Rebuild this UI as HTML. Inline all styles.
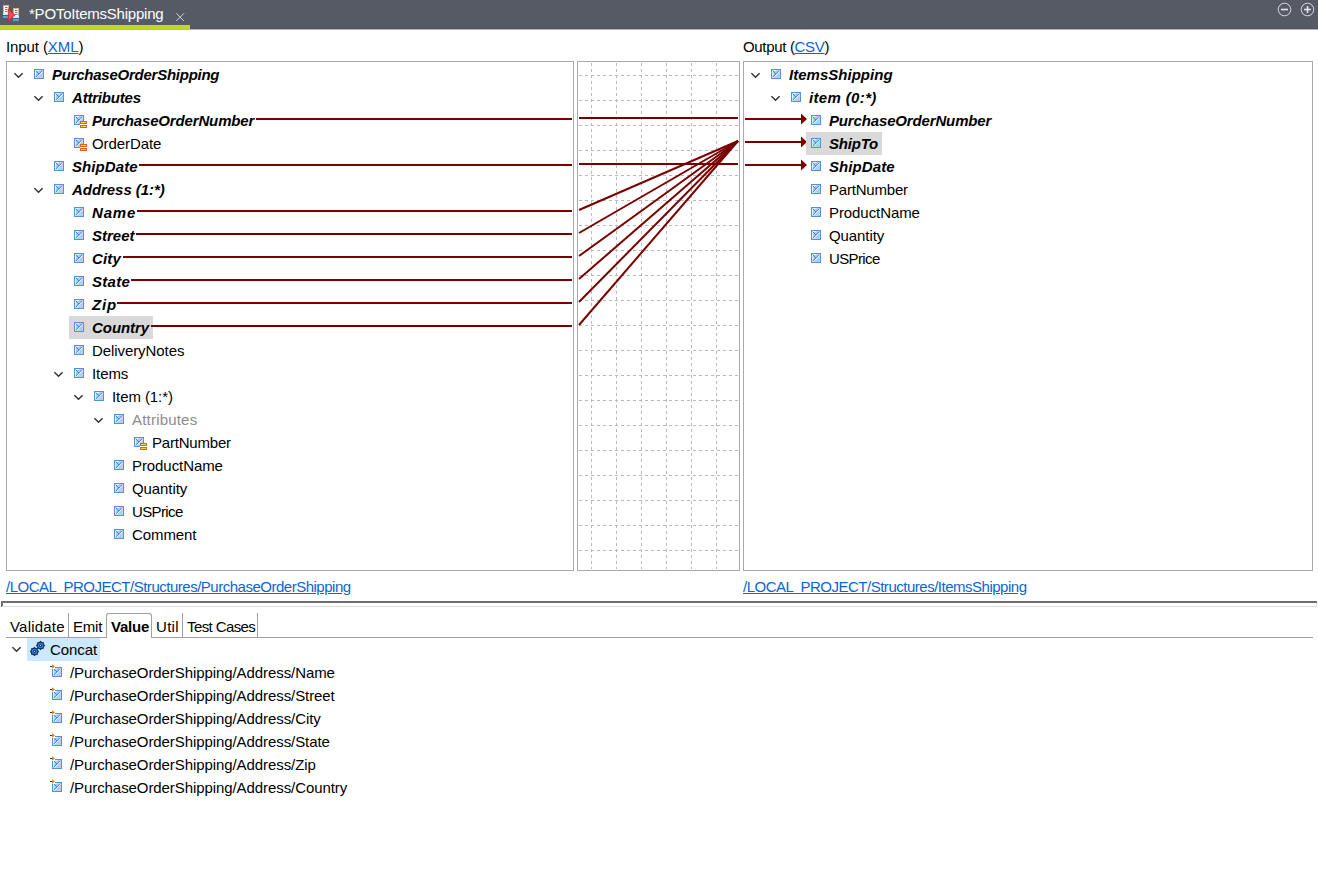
<!DOCTYPE html>
<html><head><meta charset="utf-8">
<style>
*{margin:0;padding:0;box-sizing:border-box}
html,body{width:1318px;height:885px;overflow:hidden;background:#fff;font-family:"Liberation Sans",sans-serif;font-size:15px;color:#000}
.abs{position:absolute;line-height:0}
.t{position:absolute;line-height:23px;white-space:nowrap}
.n{letter-spacing:-0.08px}
.bi{font-weight:bold;font-style:italic;letter-spacing:-0.2px}
.gr{color:#8c8c8c}
.fx{display:flex;align-items:center}
.ml{display:block;flex:1;height:2px;background:#7a0000;margin-left:2px;margin-top:-3px}
.sel{position:absolute;height:23px;background:#d9d9d9}
.ic,.ch{display:block}
a{color:#0a66d0;text-decoration:underline}
.box{position:absolute;border:1px solid #a8aab0;background:#fff}
.bar{position:absolute}
</style></head><body>
<div class="bar" style="left:0;top:0;width:1318px;height:29px;background:#565a64"></div>
<div class="bar" style="left:0;top:25px;width:190px;height:4px;background:#c1d82a"></div>
<div class="bar" style="left:190px;top:28px;width:1128px;height:1px;background:#50545e"></div>
<div class="bar" style="left:0;top:29px;width:1318px;height:1px;background:#b4b5ba"></div>
<div class="abs" style="left:0;top:0"><svg width="22" height="24" viewBox="0 0 22 24">
<rect x="3.5" y="5.5" width="5" height="9" fill="#fff" stroke="#e4b070"/><rect x="3" y="13" width="6" height="2" fill="#c8f4ff"/>
<path d="M5 7.5h2.5M5 9.5h2.5M5 11.5h2.5" stroke="#707070"/><rect x="3" y="16" width="6" height="2" fill="#5aa0e0"/>
<rect x="13.5" y="8.5" width="5" height="9" fill="#fff" stroke="#e4b070"/><rect x="13" y="16" width="6" height="2" fill="#c8f4ff"/>
<path d="M15 10.5h2.5M15 12.5h2.5M15 14.5h2.5" stroke="#3a80d0"/><rect x="13" y="19" width="6" height="2" fill="#5aa0e0"/>
<path d="M8.3 9L15 15L8.3 21Z" fill="#f04a5a" stroke="#e8102a" stroke-width="0.8"/></svg></div>
<div class="t" style="left:29px;top:2px;color:#fff;letter-spacing:-0.22px">*POToItemsShipping</div>
<div class="abs" style="left:176px;top:13px"><svg width="9" height="9" viewBox="0 0 9 9"><path d="M0.3 0.3L8 8M8 0.3L0.3 8" stroke="#cfd0d4" stroke-width="1"/></svg></div>
<div class="abs" style="left:1276px;top:2px"><svg width="40" height="16" viewBox="0 0 40 16">
<circle cx="8.5" cy="7.5" r="6.3" fill="none" stroke="#d8d9dc" stroke-width="1"/><path d="M5 7.5h7" stroke="#e8e8ea" stroke-width="1.6"/>
<circle cx="31.5" cy="7.5" r="6.3" fill="none" stroke="#d8d9dc" stroke-width="1"/><path d="M28 7.5h7M31.5 4v7" stroke="#e8e8ea" stroke-width="1.6"/></svg></div>

<div class="t" style="left:6px;top:35px;letter-spacing:-0.1px">Input (<a>XML</a>)</div>
<div class="t" style="left:743px;top:35px;letter-spacing:-0.33px">Output (<a>CSV</a>)</div>

<div class="box" style="left:6px;top:61px;width:568px;height:510px"></div>
<div class="box" style="left:577px;top:61px;width:163px;height:510px"></div>
<div class="box" style="left:743px;top:61px;width:570px;height:510px"></div>

<svg style="position:absolute;left:0;top:0" width="1318" height="885">
<g stroke="#b9b9bd" stroke-width="1" stroke-dasharray="3 3"><line x1="591.5" y1="63" x2="591.5" y2="569"/><line x1="616.5" y1="63" x2="616.5" y2="569"/><line x1="641.5" y1="63" x2="641.5" y2="569"/><line x1="666.5" y1="63" x2="666.5" y2="569"/><line x1="691.5" y1="63" x2="691.5" y2="569"/><line x1="716.5" y1="63" x2="716.5" y2="569"/><line x1="579" y1="75.5" x2="738" y2="75.5"/><line x1="579" y1="100.5" x2="738" y2="100.5"/><line x1="579" y1="125.5" x2="738" y2="125.5"/><line x1="579" y1="150.5" x2="738" y2="150.5"/><line x1="579" y1="175.5" x2="738" y2="175.5"/><line x1="579" y1="200.5" x2="738" y2="200.5"/><line x1="579" y1="225.5" x2="738" y2="225.5"/><line x1="579" y1="250.5" x2="738" y2="250.5"/><line x1="579" y1="275.5" x2="738" y2="275.5"/><line x1="579" y1="300.5" x2="738" y2="300.5"/><line x1="579" y1="325.5" x2="738" y2="325.5"/><line x1="579" y1="350.5" x2="738" y2="350.5"/><line x1="579" y1="375.5" x2="738" y2="375.5"/><line x1="579" y1="400.5" x2="738" y2="400.5"/><line x1="579" y1="425.5" x2="738" y2="425.5"/><line x1="579" y1="450.5" x2="738" y2="450.5"/><line x1="579" y1="475.5" x2="738" y2="475.5"/><line x1="579" y1="500.5" x2="738" y2="500.5"/><line x1="579" y1="525.5" x2="738" y2="525.5"/><line x1="579" y1="550.5" x2="738" y2="550.5"/></g>
<g stroke="#7a0000" stroke-width="2"><line x1="579" y1="118" x2="738" y2="118"/><line x1="579" y1="164" x2="738" y2="164"/><line x1="579" y1="210" x2="738" y2="141"/><line x1="579" y1="233" x2="738" y2="141"/><line x1="579" y1="256" x2="738" y2="141"/><line x1="579" y1="279" x2="738" y2="141"/><line x1="579" y1="302" x2="738" y2="141"/><line x1="579" y1="325" x2="738" y2="141"/><line x1="745" y1="119" x2="802" y2="119"/><path d="M801 113.5L807 119L801 124.5Z" fill="#7a0000" stroke="none"/><line x1="745" y1="142" x2="802" y2="142"/><path d="M801 136.5L807 142L801 147.5Z" fill="#7a0000" stroke="none"/><line x1="745" y1="165" x2="802" y2="165"/><path d="M801 159.5L807 165L801 170.5Z" fill="#7a0000" stroke="none"/></g>
</svg>

<div class="abs" style="left:14px;top:72px"><svg class="ch" width="11" height="8" viewBox="0 0 11 8"><path d="M0.4 1.2L4.5 5.3L8.6 1.2" fill="none" stroke="#333" stroke-width="1.5"/></svg></div>
<div class="abs" style="left:34px;top:69px"><svg class="ic" width="10" height="10" viewBox="0 0 10 10"><rect x="0.5" y="0.5" width="9" height="9" fill="#a6cff9" stroke="#5592d4"/><path d="M1.5 2V8.5M2 1.5H5" fill="none" stroke="#d2fcff"/><path d="M8.5 2V8M5 1.5H8" fill="none" stroke="#d0c4f8"/><path d="M2 8.5H7" fill="none" stroke="#b0dcc8"/><path d="M2 2L5 5" stroke="#4a82cc" stroke-width="1"/><path d="M8 1.8L1.8 8" stroke="#4a82cc" stroke-width="1"/><path d="M8.6 2.6L2.6 8.6" stroke="#e4ffff" stroke-width="1"/></svg></div>
<div class="t bi" style="left:52px;top:63px;letter-spacing:-0.25px">PurchaseOrderShipping</div>
<div class="abs" style="left:34px;top:95px"><svg class="ch" width="11" height="8" viewBox="0 0 11 8"><path d="M0.4 1.2L4.5 5.3L8.6 1.2" fill="none" stroke="#333" stroke-width="1.5"/></svg></div>
<div class="abs" style="left:54px;top:92px"><svg class="ic" width="10" height="10" viewBox="0 0 10 10"><rect x="0.5" y="0.5" width="9" height="9" fill="#a6cff9" stroke="#5592d4"/><path d="M1.5 2V8.5M2 1.5H5" fill="none" stroke="#d2fcff"/><path d="M8.5 2V8M5 1.5H8" fill="none" stroke="#d0c4f8"/><path d="M2 8.5H7" fill="none" stroke="#b0dcc8"/><path d="M2 2L5 5" stroke="#4a82cc" stroke-width="1"/><path d="M8 1.8L1.8 8" stroke="#4a82cc" stroke-width="1"/><path d="M8.6 2.6L2.6 8.6" stroke="#e4ffff" stroke-width="1"/></svg></div>
<div class="t bi" style="left:72px;top:86px">Attributes</div>
<div class="abs" style="left:74px;top:115px"><svg class="ic" width="14" height="14" viewBox="0 0 14 14"><rect x="0.5" y="0.5" width="9" height="9" fill="#a6cff9" stroke="#5592d4"/><path d="M1.5 2V8.5M2 1.5H5" fill="none" stroke="#d2fcff"/><path d="M8.5 2V8M5 1.5H8" fill="none" stroke="#d0c4f8"/><path d="M2 8.5H7" fill="none" stroke="#b0dcc8"/><path d="M2 2L5 5" stroke="#4a82cc" stroke-width="1"/><path d="M8 1.8L1.8 8" stroke="#4a82cc" stroke-width="1"/><path d="M8.6 2.6L2.6 8.6" stroke="#e4ffff" stroke-width="1"/><rect x="6" y="5.5" width="8" height="8" fill="#fff" opacity="0"/><rect x="6" y="9" width="7" height="1" fill="#fff"/><rect x="6.5" y="6.5" width="6" height="2" fill="#f6d43a" stroke="#dc6420"/><rect x="6.5" y="10.5" width="6" height="2" fill="#f6d43a" stroke="#dc6420"/></svg></div>
<div class="t bi" style="left:92px;top:109px;letter-spacing:-0.15px">PurchaseOrderNumber</div>
<div class="abs" style="left:74px;top:138px"><svg class="ic" width="14" height="14" viewBox="0 0 14 14"><rect x="0.5" y="0.5" width="9" height="9" fill="#a6cff9" stroke="#5592d4"/><path d="M1.5 2V8.5M2 1.5H5" fill="none" stroke="#d2fcff"/><path d="M8.5 2V8M5 1.5H8" fill="none" stroke="#d0c4f8"/><path d="M2 8.5H7" fill="none" stroke="#b0dcc8"/><path d="M2 2L5 5" stroke="#4a82cc" stroke-width="1"/><path d="M8 1.8L1.8 8" stroke="#4a82cc" stroke-width="1"/><path d="M8.6 2.6L2.6 8.6" stroke="#e4ffff" stroke-width="1"/><rect x="6" y="5.5" width="8" height="8" fill="#fff" opacity="0"/><rect x="6" y="9" width="7" height="1" fill="#fff"/><rect x="6.5" y="6.5" width="6" height="2" fill="#f6d43a" stroke="#dc6420"/><rect x="6.5" y="10.5" width="6" height="2" fill="#f6d43a" stroke="#dc6420"/></svg></div>
<div class="t n" style="left:92px;top:132px">OrderDate</div>
<div class="abs" style="left:54px;top:161px"><svg class="ic" width="10" height="10" viewBox="0 0 10 10"><rect x="0.5" y="0.5" width="9" height="9" fill="#a6cff9" stroke="#5592d4"/><path d="M1.5 2V8.5M2 1.5H5" fill="none" stroke="#d2fcff"/><path d="M8.5 2V8M5 1.5H8" fill="none" stroke="#d0c4f8"/><path d="M2 8.5H7" fill="none" stroke="#b0dcc8"/><path d="M2 2L5 5" stroke="#4a82cc" stroke-width="1"/><path d="M8 1.8L1.8 8" stroke="#4a82cc" stroke-width="1"/><path d="M8.6 2.6L2.6 8.6" stroke="#e4ffff" stroke-width="1"/></svg></div>
<div class="t bi" style="left:72px;top:155px;letter-spacing:0.08px">ShipDate</div>
<div class="abs" style="left:34px;top:187px"><svg class="ch" width="11" height="8" viewBox="0 0 11 8"><path d="M0.4 1.2L4.5 5.3L8.6 1.2" fill="none" stroke="#333" stroke-width="1.5"/></svg></div>
<div class="abs" style="left:54px;top:184px"><svg class="ic" width="10" height="10" viewBox="0 0 10 10"><rect x="0.5" y="0.5" width="9" height="9" fill="#a6cff9" stroke="#5592d4"/><path d="M1.5 2V8.5M2 1.5H5" fill="none" stroke="#d2fcff"/><path d="M8.5 2V8M5 1.5H8" fill="none" stroke="#d0c4f8"/><path d="M2 8.5H7" fill="none" stroke="#b0dcc8"/><path d="M2 2L5 5" stroke="#4a82cc" stroke-width="1"/><path d="M8 1.8L1.8 8" stroke="#4a82cc" stroke-width="1"/><path d="M8.6 2.6L2.6 8.6" stroke="#e4ffff" stroke-width="1"/></svg></div>
<div class="t bi" style="left:72px;top:178px;letter-spacing:-0.05px">Address (1:*)</div>
<div class="abs" style="left:74px;top:207px"><svg class="ic" width="10" height="10" viewBox="0 0 10 10"><rect x="0.5" y="0.5" width="9" height="9" fill="#a6cff9" stroke="#5592d4"/><path d="M1.5 2V8.5M2 1.5H5" fill="none" stroke="#d2fcff"/><path d="M8.5 2V8M5 1.5H8" fill="none" stroke="#d0c4f8"/><path d="M2 8.5H7" fill="none" stroke="#b0dcc8"/><path d="M2 2L5 5" stroke="#4a82cc" stroke-width="1"/><path d="M8 1.8L1.8 8" stroke="#4a82cc" stroke-width="1"/><path d="M8.6 2.6L2.6 8.6" stroke="#e4ffff" stroke-width="1"/></svg></div>
<div class="t bi" style="left:92px;top:201px;letter-spacing:0.8px">Name</div>
<div class="abs" style="left:74px;top:230px"><svg class="ic" width="10" height="10" viewBox="0 0 10 10"><rect x="0.5" y="0.5" width="9" height="9" fill="#a6cff9" stroke="#5592d4"/><path d="M1.5 2V8.5M2 1.5H5" fill="none" stroke="#d2fcff"/><path d="M8.5 2V8M5 1.5H8" fill="none" stroke="#d0c4f8"/><path d="M2 8.5H7" fill="none" stroke="#b0dcc8"/><path d="M2 2L5 5" stroke="#4a82cc" stroke-width="1"/><path d="M8 1.8L1.8 8" stroke="#4a82cc" stroke-width="1"/><path d="M8.6 2.6L2.6 8.6" stroke="#e4ffff" stroke-width="1"/></svg></div>
<div class="t bi" style="left:92px;top:224px;letter-spacing:0px">Street</div>
<div class="abs" style="left:74px;top:253px"><svg class="ic" width="10" height="10" viewBox="0 0 10 10"><rect x="0.5" y="0.5" width="9" height="9" fill="#a6cff9" stroke="#5592d4"/><path d="M1.5 2V8.5M2 1.5H5" fill="none" stroke="#d2fcff"/><path d="M8.5 2V8M5 1.5H8" fill="none" stroke="#d0c4f8"/><path d="M2 8.5H7" fill="none" stroke="#b0dcc8"/><path d="M2 2L5 5" stroke="#4a82cc" stroke-width="1"/><path d="M8 1.8L1.8 8" stroke="#4a82cc" stroke-width="1"/><path d="M8.6 2.6L2.6 8.6" stroke="#e4ffff" stroke-width="1"/></svg></div>
<div class="t bi" style="left:92px;top:247px;letter-spacing:0.15px">City</div>
<div class="abs" style="left:74px;top:276px"><svg class="ic" width="10" height="10" viewBox="0 0 10 10"><rect x="0.5" y="0.5" width="9" height="9" fill="#a6cff9" stroke="#5592d4"/><path d="M1.5 2V8.5M2 1.5H5" fill="none" stroke="#d2fcff"/><path d="M8.5 2V8M5 1.5H8" fill="none" stroke="#d0c4f8"/><path d="M2 8.5H7" fill="none" stroke="#b0dcc8"/><path d="M2 2L5 5" stroke="#4a82cc" stroke-width="1"/><path d="M8 1.8L1.8 8" stroke="#4a82cc" stroke-width="1"/><path d="M8.6 2.6L2.6 8.6" stroke="#e4ffff" stroke-width="1"/></svg></div>
<div class="t bi" style="left:92px;top:270px;letter-spacing:0.3px">State</div>
<div class="abs" style="left:74px;top:299px"><svg class="ic" width="10" height="10" viewBox="0 0 10 10"><rect x="0.5" y="0.5" width="9" height="9" fill="#a6cff9" stroke="#5592d4"/><path d="M1.5 2V8.5M2 1.5H5" fill="none" stroke="#d2fcff"/><path d="M8.5 2V8M5 1.5H8" fill="none" stroke="#d0c4f8"/><path d="M2 8.5H7" fill="none" stroke="#b0dcc8"/><path d="M2 2L5 5" stroke="#4a82cc" stroke-width="1"/><path d="M8 1.8L1.8 8" stroke="#4a82cc" stroke-width="1"/><path d="M8.6 2.6L2.6 8.6" stroke="#e4ffff" stroke-width="1"/></svg></div>
<div class="t bi" style="left:92px;top:293px;letter-spacing:0.8px">Zip</div>
<div class="sel" style="left:69px;top:316px;width:84px"></div>
<div class="abs" style="left:74px;top:322px"><svg class="ic" width="10" height="10" viewBox="0 0 10 10"><rect x="0.5" y="0.5" width="9" height="9" fill="#a6cff9" stroke="#5592d4"/><path d="M1.5 2V8.5M2 1.5H5" fill="none" stroke="#d2fcff"/><path d="M8.5 2V8M5 1.5H8" fill="none" stroke="#d0c4f8"/><path d="M2 8.5H7" fill="none" stroke="#b0dcc8"/><path d="M2 2L5 5" stroke="#4a82cc" stroke-width="1"/><path d="M8 1.8L1.8 8" stroke="#4a82cc" stroke-width="1"/><path d="M8.6 2.6L2.6 8.6" stroke="#e4ffff" stroke-width="1"/></svg></div>
<div class="t bi" style="left:92px;top:316px;letter-spacing:-0.05px">Country</div>
<div class="abs" style="left:74px;top:345px"><svg class="ic" width="10" height="10" viewBox="0 0 10 10"><rect x="0.5" y="0.5" width="9" height="9" fill="#a6cff9" stroke="#5592d4"/><path d="M1.5 2V8.5M2 1.5H5" fill="none" stroke="#d2fcff"/><path d="M8.5 2V8M5 1.5H8" fill="none" stroke="#d0c4f8"/><path d="M2 8.5H7" fill="none" stroke="#b0dcc8"/><path d="M2 2L5 5" stroke="#4a82cc" stroke-width="1"/><path d="M8 1.8L1.8 8" stroke="#4a82cc" stroke-width="1"/><path d="M8.6 2.6L2.6 8.6" stroke="#e4ffff" stroke-width="1"/></svg></div>
<div class="t n" style="left:92px;top:339px">DeliveryNotes</div>
<div class="abs" style="left:54px;top:371px"><svg class="ch" width="11" height="8" viewBox="0 0 11 8"><path d="M0.4 1.2L4.5 5.3L8.6 1.2" fill="none" stroke="#333" stroke-width="1.5"/></svg></div>
<div class="abs" style="left:74px;top:368px"><svg class="ic" width="10" height="10" viewBox="0 0 10 10"><rect x="0.5" y="0.5" width="9" height="9" fill="#a6cff9" stroke="#5592d4"/><path d="M1.5 2V8.5M2 1.5H5" fill="none" stroke="#d2fcff"/><path d="M8.5 2V8M5 1.5H8" fill="none" stroke="#d0c4f8"/><path d="M2 8.5H7" fill="none" stroke="#b0dcc8"/><path d="M2 2L5 5" stroke="#4a82cc" stroke-width="1"/><path d="M8 1.8L1.8 8" stroke="#4a82cc" stroke-width="1"/><path d="M8.6 2.6L2.6 8.6" stroke="#e4ffff" stroke-width="1"/></svg></div>
<div class="t n" style="left:92px;top:362px">Items</div>
<div class="abs" style="left:74px;top:394px"><svg class="ch" width="11" height="8" viewBox="0 0 11 8"><path d="M0.4 1.2L4.5 5.3L8.6 1.2" fill="none" stroke="#333" stroke-width="1.5"/></svg></div>
<div class="abs" style="left:94px;top:391px"><svg class="ic" width="10" height="10" viewBox="0 0 10 10"><rect x="0.5" y="0.5" width="9" height="9" fill="#a6cff9" stroke="#5592d4"/><path d="M1.5 2V8.5M2 1.5H5" fill="none" stroke="#d2fcff"/><path d="M8.5 2V8M5 1.5H8" fill="none" stroke="#d0c4f8"/><path d="M2 8.5H7" fill="none" stroke="#b0dcc8"/><path d="M2 2L5 5" stroke="#4a82cc" stroke-width="1"/><path d="M8 1.8L1.8 8" stroke="#4a82cc" stroke-width="1"/><path d="M8.6 2.6L2.6 8.6" stroke="#e4ffff" stroke-width="1"/></svg></div>
<div class="t n" style="left:112px;top:385px">Item (1:*)</div>
<div class="abs" style="left:94px;top:417px"><svg class="ch" width="11" height="8" viewBox="0 0 11 8"><path d="M0.4 1.2L4.5 5.3L8.6 1.2" fill="none" stroke="#333" stroke-width="1.5"/></svg></div>
<div class="abs" style="left:114px;top:414px"><svg class="ic" width="10" height="10" viewBox="0 0 10 10"><rect x="0.5" y="0.5" width="9" height="9" fill="#a6cff9" stroke="#5592d4"/><path d="M1.5 2V8.5M2 1.5H5" fill="none" stroke="#d2fcff"/><path d="M8.5 2V8M5 1.5H8" fill="none" stroke="#d0c4f8"/><path d="M2 8.5H7" fill="none" stroke="#b0dcc8"/><path d="M2 2L5 5" stroke="#4a82cc" stroke-width="1"/><path d="M8 1.8L1.8 8" stroke="#4a82cc" stroke-width="1"/><path d="M8.6 2.6L2.6 8.6" stroke="#e4ffff" stroke-width="1"/></svg></div>
<div class="t n gr" style="left:132px;top:408px;letter-spacing:0.2px">Attributes</div>
<div class="abs" style="left:134px;top:437px"><svg class="ic" width="14" height="14" viewBox="0 0 14 14"><rect x="0.5" y="0.5" width="9" height="9" fill="#a6cff9" stroke="#5592d4"/><path d="M1.5 2V8.5M2 1.5H5" fill="none" stroke="#d2fcff"/><path d="M8.5 2V8M5 1.5H8" fill="none" stroke="#d0c4f8"/><path d="M2 8.5H7" fill="none" stroke="#b0dcc8"/><path d="M2 2L5 5" stroke="#4a82cc" stroke-width="1"/><path d="M8 1.8L1.8 8" stroke="#4a82cc" stroke-width="1"/><path d="M8.6 2.6L2.6 8.6" stroke="#e4ffff" stroke-width="1"/><rect x="6" y="5.5" width="8" height="8" fill="#fff" opacity="0"/><rect x="6" y="9" width="7" height="1" fill="#fff"/><rect x="6.5" y="6.5" width="6" height="2" fill="#f6d43a" stroke="#dc6420"/><rect x="6.5" y="10.5" width="6" height="2" fill="#f6d43a" stroke="#dc6420"/></svg></div>
<div class="t n" style="left:152px;top:431px;letter-spacing:-0.2px">PartNumber</div>
<div class="abs" style="left:114px;top:460px"><svg class="ic" width="10" height="10" viewBox="0 0 10 10"><rect x="0.5" y="0.5" width="9" height="9" fill="#a6cff9" stroke="#5592d4"/><path d="M1.5 2V8.5M2 1.5H5" fill="none" stroke="#d2fcff"/><path d="M8.5 2V8M5 1.5H8" fill="none" stroke="#d0c4f8"/><path d="M2 8.5H7" fill="none" stroke="#b0dcc8"/><path d="M2 2L5 5" stroke="#4a82cc" stroke-width="1"/><path d="M8 1.8L1.8 8" stroke="#4a82cc" stroke-width="1"/><path d="M8.6 2.6L2.6 8.6" stroke="#e4ffff" stroke-width="1"/></svg></div>
<div class="t n" style="left:132px;top:454px">ProductName</div>
<div class="abs" style="left:114px;top:483px"><svg class="ic" width="10" height="10" viewBox="0 0 10 10"><rect x="0.5" y="0.5" width="9" height="9" fill="#a6cff9" stroke="#5592d4"/><path d="M1.5 2V8.5M2 1.5H5" fill="none" stroke="#d2fcff"/><path d="M8.5 2V8M5 1.5H8" fill="none" stroke="#d0c4f8"/><path d="M2 8.5H7" fill="none" stroke="#b0dcc8"/><path d="M2 2L5 5" stroke="#4a82cc" stroke-width="1"/><path d="M8 1.8L1.8 8" stroke="#4a82cc" stroke-width="1"/><path d="M8.6 2.6L2.6 8.6" stroke="#e4ffff" stroke-width="1"/></svg></div>
<div class="t n" style="left:132px;top:477px">Quantity</div>
<div class="abs" style="left:114px;top:506px"><svg class="ic" width="10" height="10" viewBox="0 0 10 10"><rect x="0.5" y="0.5" width="9" height="9" fill="#a6cff9" stroke="#5592d4"/><path d="M1.5 2V8.5M2 1.5H5" fill="none" stroke="#d2fcff"/><path d="M8.5 2V8M5 1.5H8" fill="none" stroke="#d0c4f8"/><path d="M2 8.5H7" fill="none" stroke="#b0dcc8"/><path d="M2 2L5 5" stroke="#4a82cc" stroke-width="1"/><path d="M8 1.8L1.8 8" stroke="#4a82cc" stroke-width="1"/><path d="M8.6 2.6L2.6 8.6" stroke="#e4ffff" stroke-width="1"/></svg></div>
<div class="t n" style="left:132px;top:500px;letter-spacing:-0.62px">USPrice</div>
<div class="abs" style="left:114px;top:529px"><svg class="ic" width="10" height="10" viewBox="0 0 10 10"><rect x="0.5" y="0.5" width="9" height="9" fill="#a6cff9" stroke="#5592d4"/><path d="M1.5 2V8.5M2 1.5H5" fill="none" stroke="#d2fcff"/><path d="M8.5 2V8M5 1.5H8" fill="none" stroke="#d0c4f8"/><path d="M2 8.5H7" fill="none" stroke="#b0dcc8"/><path d="M2 2L5 5" stroke="#4a82cc" stroke-width="1"/><path d="M8 1.8L1.8 8" stroke="#4a82cc" stroke-width="1"/><path d="M8.6 2.6L2.6 8.6" stroke="#e4ffff" stroke-width="1"/></svg></div>
<div class="t n" style="left:132px;top:523px">Comment</div>
<div class="abs" style="left:751px;top:72px"><svg class="ch" width="11" height="8" viewBox="0 0 11 8"><path d="M0.4 1.2L4.5 5.3L8.6 1.2" fill="none" stroke="#333" stroke-width="1.5"/></svg></div>
<div class="abs" style="left:771px;top:69px"><svg class="ic" width="10" height="10" viewBox="0 0 10 10"><rect x="0.5" y="0.5" width="9" height="9" fill="#a6cff9" stroke="#5592d4"/><path d="M1.5 2V8.5M2 1.5H5" fill="none" stroke="#d2fcff"/><path d="M8.5 2V8M5 1.5H8" fill="none" stroke="#d0c4f8"/><path d="M2 8.5H7" fill="none" stroke="#b0dcc8"/><path d="M2 2L5 5" stroke="#4a82cc" stroke-width="1"/><path d="M8 1.8L1.8 8" stroke="#4a82cc" stroke-width="1"/><path d="M8.6 2.6L2.6 8.6" stroke="#e4ffff" stroke-width="1"/></svg></div>
<div class="t bi" style="left:789px;top:63px;letter-spacing:0.02px">ItemsShipping</div>
<div class="abs" style="left:771px;top:95px"><svg class="ch" width="11" height="8" viewBox="0 0 11 8"><path d="M0.4 1.2L4.5 5.3L8.6 1.2" fill="none" stroke="#333" stroke-width="1.5"/></svg></div>
<div class="abs" style="left:791px;top:92px"><svg class="ic" width="10" height="10" viewBox="0 0 10 10"><rect x="0.5" y="0.5" width="9" height="9" fill="#a6cff9" stroke="#5592d4"/><path d="M1.5 2V8.5M2 1.5H5" fill="none" stroke="#d2fcff"/><path d="M8.5 2V8M5 1.5H8" fill="none" stroke="#d0c4f8"/><path d="M2 8.5H7" fill="none" stroke="#b0dcc8"/><path d="M2 2L5 5" stroke="#4a82cc" stroke-width="1"/><path d="M8 1.8L1.8 8" stroke="#4a82cc" stroke-width="1"/><path d="M8.6 2.6L2.6 8.6" stroke="#e4ffff" stroke-width="1"/></svg></div>
<div class="t bi" style="left:809px;top:86px;letter-spacing:0.35px">item (0:*)</div>
<div class="abs" style="left:811px;top:115px"><svg class="ic" width="10" height="10" viewBox="0 0 10 10"><rect x="0.5" y="0.5" width="9" height="9" fill="#a6cff9" stroke="#5592d4"/><path d="M1.5 2V8.5M2 1.5H5" fill="none" stroke="#d2fcff"/><path d="M8.5 2V8M5 1.5H8" fill="none" stroke="#d0c4f8"/><path d="M2 8.5H7" fill="none" stroke="#b0dcc8"/><path d="M2 2L5 5" stroke="#4a82cc" stroke-width="1"/><path d="M8 1.8L1.8 8" stroke="#4a82cc" stroke-width="1"/><path d="M8.6 2.6L2.6 8.6" stroke="#e4ffff" stroke-width="1"/></svg></div>
<div class="t bi" style="left:829px;top:109px;letter-spacing:-0.15px">PurchaseOrderNumber</div>
<div class="sel" style="left:806px;top:132px;width:76px"></div>
<div class="abs" style="left:811px;top:138px"><svg class="ic" width="10" height="10" viewBox="0 0 10 10"><rect x="0.5" y="0.5" width="9" height="9" fill="#a6cff9" stroke="#5592d4"/><path d="M1.5 2V8.5M2 1.5H5" fill="none" stroke="#d2fcff"/><path d="M8.5 2V8M5 1.5H8" fill="none" stroke="#d0c4f8"/><path d="M2 8.5H7" fill="none" stroke="#b0dcc8"/><path d="M2 2L5 5" stroke="#4a82cc" stroke-width="1"/><path d="M8 1.8L1.8 8" stroke="#4a82cc" stroke-width="1"/><path d="M8.6 2.6L2.6 8.6" stroke="#e4ffff" stroke-width="1"/></svg></div>
<div class="t bi" style="left:829px;top:132px">ShipTo</div>
<div class="abs" style="left:811px;top:161px"><svg class="ic" width="10" height="10" viewBox="0 0 10 10"><rect x="0.5" y="0.5" width="9" height="9" fill="#a6cff9" stroke="#5592d4"/><path d="M1.5 2V8.5M2 1.5H5" fill="none" stroke="#d2fcff"/><path d="M8.5 2V8M5 1.5H8" fill="none" stroke="#d0c4f8"/><path d="M2 8.5H7" fill="none" stroke="#b0dcc8"/><path d="M2 2L5 5" stroke="#4a82cc" stroke-width="1"/><path d="M8 1.8L1.8 8" stroke="#4a82cc" stroke-width="1"/><path d="M8.6 2.6L2.6 8.6" stroke="#e4ffff" stroke-width="1"/></svg></div>
<div class="t bi" style="left:829px;top:155px;letter-spacing:0.08px">ShipDate</div>
<div class="abs" style="left:811px;top:184px"><svg class="ic" width="10" height="10" viewBox="0 0 10 10"><rect x="0.5" y="0.5" width="9" height="9" fill="#a6cff9" stroke="#5592d4"/><path d="M1.5 2V8.5M2 1.5H5" fill="none" stroke="#d2fcff"/><path d="M8.5 2V8M5 1.5H8" fill="none" stroke="#d0c4f8"/><path d="M2 8.5H7" fill="none" stroke="#b0dcc8"/><path d="M2 2L5 5" stroke="#4a82cc" stroke-width="1"/><path d="M8 1.8L1.8 8" stroke="#4a82cc" stroke-width="1"/><path d="M8.6 2.6L2.6 8.6" stroke="#e4ffff" stroke-width="1"/></svg></div>
<div class="t n" style="left:829px;top:178px;letter-spacing:-0.2px">PartNumber</div>
<div class="abs" style="left:811px;top:207px"><svg class="ic" width="10" height="10" viewBox="0 0 10 10"><rect x="0.5" y="0.5" width="9" height="9" fill="#a6cff9" stroke="#5592d4"/><path d="M1.5 2V8.5M2 1.5H5" fill="none" stroke="#d2fcff"/><path d="M8.5 2V8M5 1.5H8" fill="none" stroke="#d0c4f8"/><path d="M2 8.5H7" fill="none" stroke="#b0dcc8"/><path d="M2 2L5 5" stroke="#4a82cc" stroke-width="1"/><path d="M8 1.8L1.8 8" stroke="#4a82cc" stroke-width="1"/><path d="M8.6 2.6L2.6 8.6" stroke="#e4ffff" stroke-width="1"/></svg></div>
<div class="t n" style="left:829px;top:201px">ProductName</div>
<div class="abs" style="left:811px;top:230px"><svg class="ic" width="10" height="10" viewBox="0 0 10 10"><rect x="0.5" y="0.5" width="9" height="9" fill="#a6cff9" stroke="#5592d4"/><path d="M1.5 2V8.5M2 1.5H5" fill="none" stroke="#d2fcff"/><path d="M8.5 2V8M5 1.5H8" fill="none" stroke="#d0c4f8"/><path d="M2 8.5H7" fill="none" stroke="#b0dcc8"/><path d="M2 2L5 5" stroke="#4a82cc" stroke-width="1"/><path d="M8 1.8L1.8 8" stroke="#4a82cc" stroke-width="1"/><path d="M8.6 2.6L2.6 8.6" stroke="#e4ffff" stroke-width="1"/></svg></div>
<div class="t n" style="left:829px;top:224px">Quantity</div>
<div class="abs" style="left:811px;top:253px"><svg class="ic" width="10" height="10" viewBox="0 0 10 10"><rect x="0.5" y="0.5" width="9" height="9" fill="#a6cff9" stroke="#5592d4"/><path d="M1.5 2V8.5M2 1.5H5" fill="none" stroke="#d2fcff"/><path d="M8.5 2V8M5 1.5H8" fill="none" stroke="#d0c4f8"/><path d="M2 8.5H7" fill="none" stroke="#b0dcc8"/><path d="M2 2L5 5" stroke="#4a82cc" stroke-width="1"/><path d="M8 1.8L1.8 8" stroke="#4a82cc" stroke-width="1"/><path d="M8.6 2.6L2.6 8.6" stroke="#e4ffff" stroke-width="1"/></svg></div>
<div class="t n" style="left:829px;top:247px;letter-spacing:-0.62px">USPrice</div>
<svg style="position:absolute;left:0;top:0" width="1318" height="885"><g stroke="#7a0000" stroke-width="2"><line x1="256" y1="119" x2="572" y2="119"/><line x1="139" y1="165" x2="572" y2="165"/><line x1="137" y1="211" x2="572" y2="211"/><line x1="136" y1="234" x2="572" y2="234"/><line x1="123" y1="257" x2="572" y2="257"/><line x1="131" y1="280" x2="572" y2="280"/><line x1="117" y1="303" x2="572" y2="303"/><line x1="151" y1="326" x2="572" y2="326"/></g></svg>

<div class="t" style="left:6px;top:575px;letter-spacing:-0.49px"><a>/LOCAL&#8194;PROJECT/Structures/PurchaseOrderShipping</a></div>
<div class="t" style="left:743px;top:575px;letter-spacing:-0.49px"><a>/LOCAL&#8194;PROJECT/Structures/ItemsShipping</a></div>

<div class="bar" style="left:1px;top:601px;width:1316px;height:2px;background:#6f6f6f"></div>
<div class="bar" style="left:1px;top:601px;width:2px;height:6px;background:#6f6f6f"></div>
<div class="bar" style="left:2px;top:606px;width:1315px;height:1px;background:#dedede"></div>
<div class="bar" style="left:1316px;top:603px;width:1px;height:4px;background:#dedede"></div>

<div class="bar" style="left:6px;top:637px;width:100px;height:1px;background:#a0a0a0"></div>
<div class="bar" style="left:151px;top:637px;width:1162px;height:1px;background:#a0a0a0"></div>
<div class="bar" style="left:68px;top:613px;width:1px;height:24px;background:#a0a0a0"></div>
<div class="bar" style="left:182px;top:613px;width:1px;height:24px;background:#a0a0a0"></div>
<div class="bar" style="left:257px;top:613px;width:1px;height:24px;background:#a0a0a0"></div>
<div class="bar" style="left:106px;top:613px;width:46px;height:25px;border:1px solid #a0a0a0;border-bottom:none;border-radius:3px 3px 0 0;background:#fff"></div>
<div class="t" style="left:10px;top:615px;letter-spacing:0.2px">Validate</div>
<div class="t" style="left:73px;top:615px;letter-spacing:-0.2px">Emit</div>
<div class="t" style="left:111px;top:615px;font-weight:bold;letter-spacing:-0.2px">Value</div>
<div class="t" style="left:156px;top:615px;letter-spacing:0.3px">Util</div>
<div class="t" style="left:187px;top:615px;letter-spacing:-0.6px">Test Cases</div>

<div class="bar" style="left:27px;top:638px;width:73px;height:23px;background:#cce8ff"></div>
<div class="abs" style="left:12px;top:646px"><svg class="ch" width="11" height="8" viewBox="0 0 11 8"><path d="M0.4 1.2L4.5 5.3L8.6 1.2" fill="none" stroke="#333" stroke-width="1.5"/></svg></div>
<div class="abs" style="left:28px;top:638px"><svg width="20" height="20" viewBox="0 0 20 20"><polygon points="11.20,13.50 9.92,14.92 9.82,16.82 7.92,16.92 6.50,18.20 5.08,16.92 3.18,16.82 3.08,14.92 1.80,13.50 3.08,12.08 3.18,10.18 5.08,10.08 6.50,8.80 7.92,10.08 9.82,10.18 9.92,12.08" fill="#08306a"/><circle cx="6.5" cy="13.5" r="2.8" fill="#3f7fc6"/><circle cx="6.5" cy="13.5" r="1.5" fill="#08306a"/><circle cx="6.5" cy="13.5" r="0.6" fill="#fff"/><polygon points="17.20,7.50 15.92,8.92 15.82,10.82 13.92,10.92 12.50,12.20 11.08,10.92 9.18,10.82 9.08,8.92 7.80,7.50 9.08,6.08 9.18,4.18 11.08,4.08 12.50,2.80 13.92,4.08 15.82,4.18 15.92,6.08" fill="#08306a"/><circle cx="12.5" cy="7.5" r="2.8" fill="#3f7fc6"/><circle cx="12.5" cy="7.5" r="1.5" fill="#08306a"/><circle cx="12.5" cy="7.5" r="0.6" fill="#fff"/></svg></div>
<div class="t n" style="left:50px;top:638px">Concat</div>
<div class="abs" style="left:50px;top:664px"><svg class="ic" width="14" height="14" viewBox="0 0 14 14"><g transform="translate(2,3)"><rect x="0.5" y="0.5" width="9" height="9" fill="#a6cff9" stroke="#5592d4"/><path d="M1.5 2V8.5M2 1.5H5" fill="none" stroke="#d2fcff"/><path d="M8.5 2V8M5 1.5H8" fill="none" stroke="#d0c4f8"/><path d="M2 8.5H7" fill="none" stroke="#b0dcc8"/><path d="M2 2L5 5" stroke="#4a82cc" stroke-width="1"/><path d="M8 1.8L1.8 8" stroke="#4a82cc" stroke-width="1"/><path d="M8.6 2.6L2.6 8.6" stroke="#e4ffff" stroke-width="1"/></g><rect x="1" y="0" width="4" height="5" fill="#fff"/><rect x="0" y="2" width="2.5" height="1" fill="#1a3a6a"/><path d="M2 0.3L5 2.5L2 4.8Z" fill="#e3801a"/></svg></div><div class="t n" style="left:70px;top:661px">/PurchaseOrderShipping/Address/Name</div>
<div class="abs" style="left:50px;top:687px"><svg class="ic" width="14" height="14" viewBox="0 0 14 14"><g transform="translate(2,3)"><rect x="0.5" y="0.5" width="9" height="9" fill="#a6cff9" stroke="#5592d4"/><path d="M1.5 2V8.5M2 1.5H5" fill="none" stroke="#d2fcff"/><path d="M8.5 2V8M5 1.5H8" fill="none" stroke="#d0c4f8"/><path d="M2 8.5H7" fill="none" stroke="#b0dcc8"/><path d="M2 2L5 5" stroke="#4a82cc" stroke-width="1"/><path d="M8 1.8L1.8 8" stroke="#4a82cc" stroke-width="1"/><path d="M8.6 2.6L2.6 8.6" stroke="#e4ffff" stroke-width="1"/></g><rect x="1" y="0" width="4" height="5" fill="#fff"/><rect x="0" y="2" width="2.5" height="1" fill="#1a3a6a"/><path d="M2 0.3L5 2.5L2 4.8Z" fill="#e3801a"/></svg></div><div class="t n" style="left:70px;top:684px">/PurchaseOrderShipping/Address/Street</div>
<div class="abs" style="left:50px;top:710px"><svg class="ic" width="14" height="14" viewBox="0 0 14 14"><g transform="translate(2,3)"><rect x="0.5" y="0.5" width="9" height="9" fill="#a6cff9" stroke="#5592d4"/><path d="M1.5 2V8.5M2 1.5H5" fill="none" stroke="#d2fcff"/><path d="M8.5 2V8M5 1.5H8" fill="none" stroke="#d0c4f8"/><path d="M2 8.5H7" fill="none" stroke="#b0dcc8"/><path d="M2 2L5 5" stroke="#4a82cc" stroke-width="1"/><path d="M8 1.8L1.8 8" stroke="#4a82cc" stroke-width="1"/><path d="M8.6 2.6L2.6 8.6" stroke="#e4ffff" stroke-width="1"/></g><rect x="1" y="0" width="4" height="5" fill="#fff"/><rect x="0" y="2" width="2.5" height="1" fill="#1a3a6a"/><path d="M2 0.3L5 2.5L2 4.8Z" fill="#e3801a"/></svg></div><div class="t n" style="left:70px;top:707px">/PurchaseOrderShipping/Address/City</div>
<div class="abs" style="left:50px;top:733px"><svg class="ic" width="14" height="14" viewBox="0 0 14 14"><g transform="translate(2,3)"><rect x="0.5" y="0.5" width="9" height="9" fill="#a6cff9" stroke="#5592d4"/><path d="M1.5 2V8.5M2 1.5H5" fill="none" stroke="#d2fcff"/><path d="M8.5 2V8M5 1.5H8" fill="none" stroke="#d0c4f8"/><path d="M2 8.5H7" fill="none" stroke="#b0dcc8"/><path d="M2 2L5 5" stroke="#4a82cc" stroke-width="1"/><path d="M8 1.8L1.8 8" stroke="#4a82cc" stroke-width="1"/><path d="M8.6 2.6L2.6 8.6" stroke="#e4ffff" stroke-width="1"/></g><rect x="1" y="0" width="4" height="5" fill="#fff"/><rect x="0" y="2" width="2.5" height="1" fill="#1a3a6a"/><path d="M2 0.3L5 2.5L2 4.8Z" fill="#e3801a"/></svg></div><div class="t n" style="left:70px;top:730px">/PurchaseOrderShipping/Address/State</div>
<div class="abs" style="left:50px;top:756px"><svg class="ic" width="14" height="14" viewBox="0 0 14 14"><g transform="translate(2,3)"><rect x="0.5" y="0.5" width="9" height="9" fill="#a6cff9" stroke="#5592d4"/><path d="M1.5 2V8.5M2 1.5H5" fill="none" stroke="#d2fcff"/><path d="M8.5 2V8M5 1.5H8" fill="none" stroke="#d0c4f8"/><path d="M2 8.5H7" fill="none" stroke="#b0dcc8"/><path d="M2 2L5 5" stroke="#4a82cc" stroke-width="1"/><path d="M8 1.8L1.8 8" stroke="#4a82cc" stroke-width="1"/><path d="M8.6 2.6L2.6 8.6" stroke="#e4ffff" stroke-width="1"/></g><rect x="1" y="0" width="4" height="5" fill="#fff"/><rect x="0" y="2" width="2.5" height="1" fill="#1a3a6a"/><path d="M2 0.3L5 2.5L2 4.8Z" fill="#e3801a"/></svg></div><div class="t n" style="left:70px;top:753px">/PurchaseOrderShipping/Address/Zip</div>
<div class="abs" style="left:50px;top:779px"><svg class="ic" width="14" height="14" viewBox="0 0 14 14"><g transform="translate(2,3)"><rect x="0.5" y="0.5" width="9" height="9" fill="#a6cff9" stroke="#5592d4"/><path d="M1.5 2V8.5M2 1.5H5" fill="none" stroke="#d2fcff"/><path d="M8.5 2V8M5 1.5H8" fill="none" stroke="#d0c4f8"/><path d="M2 8.5H7" fill="none" stroke="#b0dcc8"/><path d="M2 2L5 5" stroke="#4a82cc" stroke-width="1"/><path d="M8 1.8L1.8 8" stroke="#4a82cc" stroke-width="1"/><path d="M8.6 2.6L2.6 8.6" stroke="#e4ffff" stroke-width="1"/></g><rect x="1" y="0" width="4" height="5" fill="#fff"/><rect x="0" y="2" width="2.5" height="1" fill="#1a3a6a"/><path d="M2 0.3L5 2.5L2 4.8Z" fill="#e3801a"/></svg></div><div class="t n" style="left:70px;top:776px">/PurchaseOrderShipping/Address/Country</div>
</body></html>
